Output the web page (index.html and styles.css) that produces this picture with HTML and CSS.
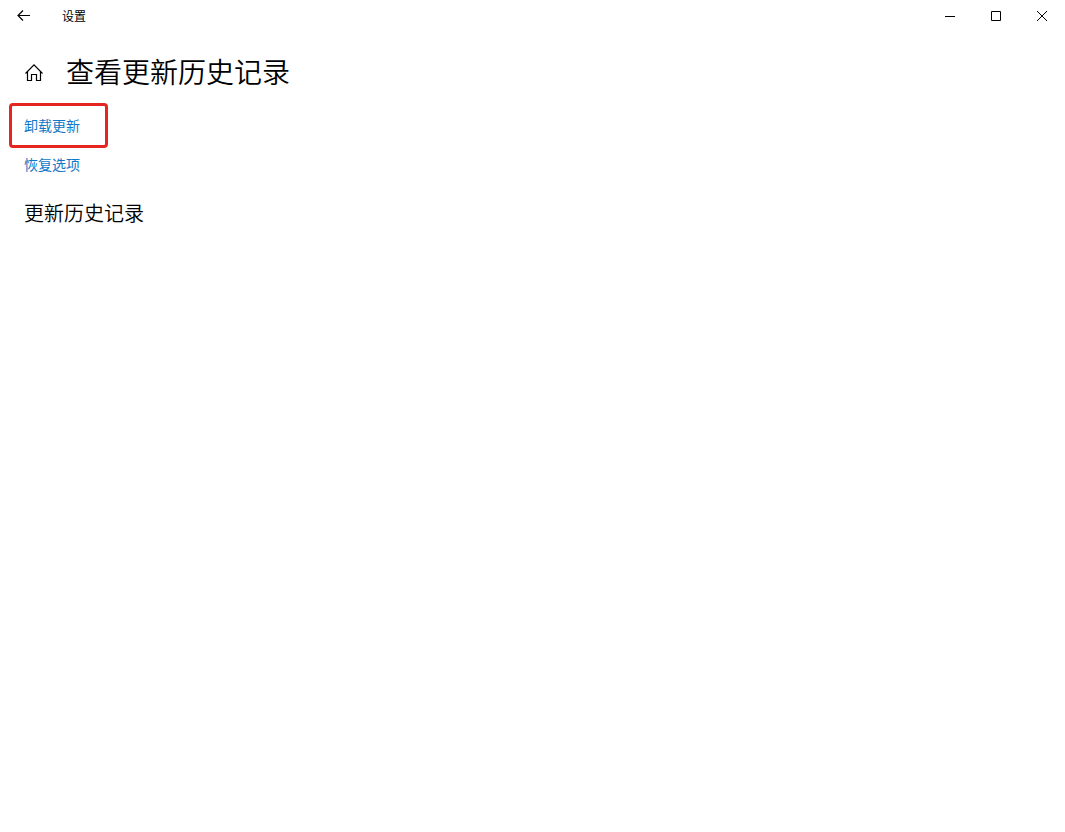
FILE: index.html
```
<!DOCTYPE html>
<html lang="zh-CN">

<head>
    <meta charset="UTF-8">
    <meta name="viewport" content="width=device-width, initial-scale=1.0">
    <title>设置</title>
    <link rel="stylesheet" href="styles.css">
</head>

<body>

    <header class="titlebar">
        <button class="back" aria-label="返回">
            <svg width="14" height="12" viewBox="0 0 14 12">
                <path d="M13 5.5H1M6 0.5L1 5.5L6 10.5" />
            </svg>
        </button>
        <span class="appName">设置</span>
        <div class="windowButtons">
            <button aria-label="最小化">
                <svg width="10" height="10" viewBox="0 0 10 10">
                    <path d="M0 5.5H10" />
                </svg>
            </button>
            <button aria-label="最大化">
                <svg width="10" height="10" viewBox="0 0 10 10">
                    <path d="M0.5 0.5H9.5V9.5H0.5Z" />
                </svg>
            </button>
            <button aria-label="关闭">
                <svg width="10" height="10" viewBox="0 0 10 10">
                    <path d="M0 0L10 10M10 0L0 10" />
                </svg>
            </button>
        </div>
    </header>

    <main>
        <div class="pageHead">
            <button class="home" aria-label="主页">
                <svg width="20" height="18" viewBox="0 0 20 18">
                    <path d="M1.5 10.5L10 1.8L18.5 10.5M3.5 8.5V17.5H7.5V11.5H12.5V17.5H16.5V8.5" />
                </svg>
            </button>
            <h1>查看更新历史记录</h1>
        </div>

        <nav class="links">
            <a href="#" class="marked">卸载更新</a>
            <a href="#">恢复选项</a>
        </nav>

        <h2>更新历史记录</h2>
    </main>

</body>

</html>
```

FILE: styles.css
```
* {
    box-sizing: border-box;
    margin: 0;
}

body {
    background: #fff;
    color: #000;
    font-family: "Noto Sans CJK SC", sans-serif;
    font-size: 14px;
}

button {
    display: flex;
    align-items: center;
    justify-content: center;
    padding: 0;
    border: 0;
    background: none;
    color: inherit;
}

svg {
    display: block;
    fill: none;
    stroke: currentColor;
}

.titlebar {
    display: flex;
    align-items: center;
    height: 32px;
}

.back {
    width: 48px;
    height: 32px;
}

.back svg,
.home svg {
    stroke-width: 1.2;
}

.appName {
    margin-left: 14px;
    font-size: 12px;
    line-height: 16px;
}

.windowButtons {
    display: flex;
    margin-left: auto;
}

.windowButtons button {
    width: 46px;
    height: 32px;
}

main {
    padding: 20px 24px;
}

.pageHead {
    display: flex;
    align-items: center;
    gap: 22px;
}

h1 {
    padding-bottom: 2px;
    font-size: 28px;
    font-weight: 350;
    line-height: 38px;
}

.links {
    display: flex;
    flex-direction: column;
    align-items: flex-start;
    gap: 6px;
    margin-top: 11px;
}

.links a {
    color: #0f78c8;
    line-height: 20px;
    text-decoration: none;
}

/* red frame hangs out to the left so the link text stays in line */
.links .marked {
    margin-left: -15px;
    padding: 9px 25px 10px 12px;
    border: 3px solid #e52620;
    border-radius: 4px;
}

h2 {
    margin-top: 25px;
    font-size: 20px;
    font-weight: 350;
    line-height: 28px;
}
```
